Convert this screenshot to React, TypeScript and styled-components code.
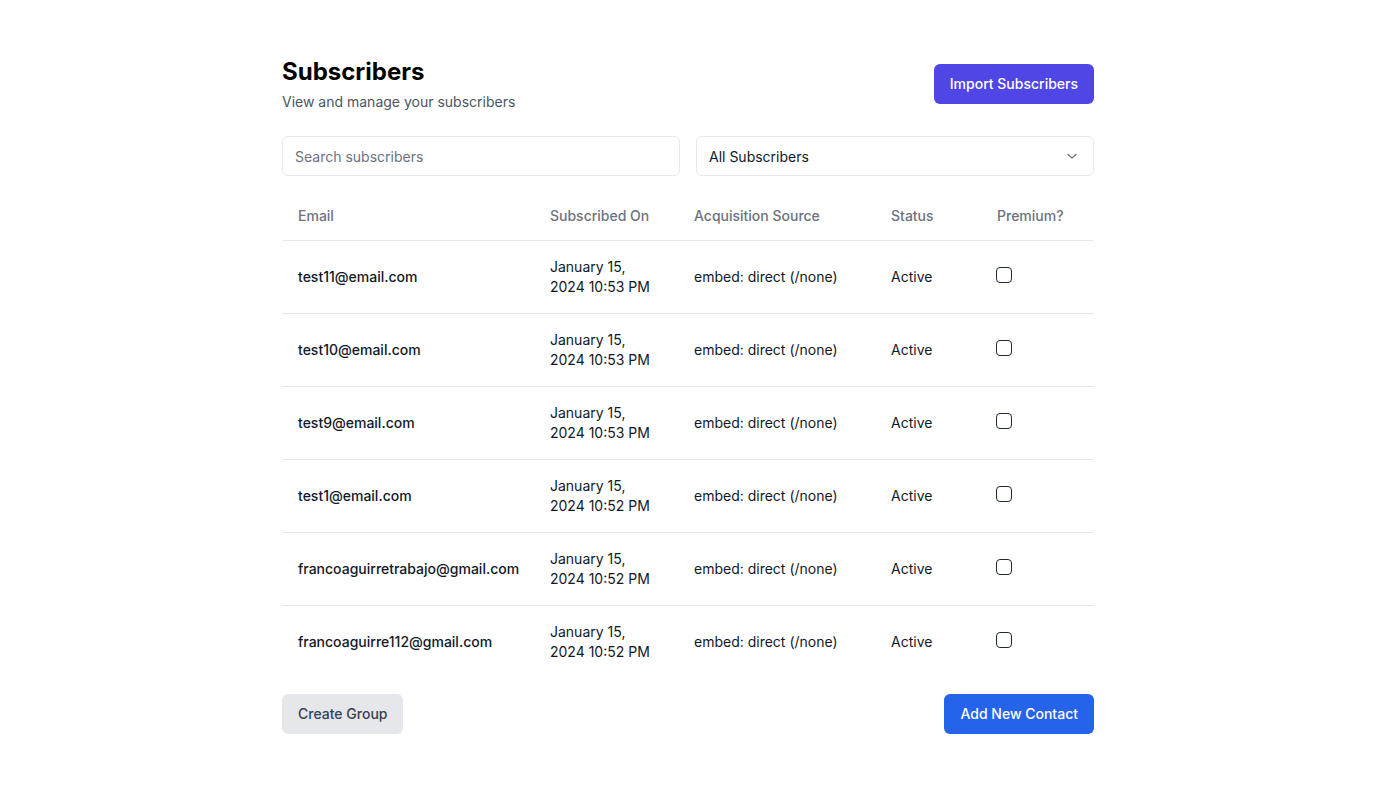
import React from "react";
import styled, { createGlobalStyle } from "styled-components";

const Global = createGlobalStyle`
  * { box-sizing: border-box; }
  body { margin: 0; background: #ffffff; font-family: Inter, "Noto Sans", sans-serif; color: #111827; }
`;

const Page = styled.div`
  width: 812px;
  margin: 0 auto;
  padding-top: 56px;
`;

const Header = styled.div`
  display: flex;
  align-items: center;
  justify-content: space-between;
  margin-bottom: 24px;
`;

const Title = styled.h1`
  margin: 0;
  font-size: 24px;
  line-height: 32px;
  font-weight: 700;
  color: #000;
`;

const Subtitle = styled.p`
  margin: 4px 0 0;
  font-size: 14px;
  line-height: 20px;
  color: #4b5563;
`;

const Button = styled.button<{ $variant: "indigo" | "blue" | "gray" }>`
  height: 40px;
  padding: 0 16px 1px;
  border: none;
  border-radius: 6px;
  font-family: inherit;
  font-size: 14px;
  font-weight: 500;
  cursor: pointer;
  background: ${(p) => (p.$variant === "indigo" ? "#4f46e5" : p.$variant === "blue" ? "#2563eb" : "#e5e7eb")};
  color: ${(p) => (p.$variant === "gray" ? "#374151" : "#ffffff")};
`;

const Filters = styled.div`
  display: grid;
  grid-template-columns: 1fr 1fr;
  gap: 16px;
  margin-bottom: 14px;
`;

const Input = styled.input`
  height: 40px;
  width: 100%;
  border: 1px solid #e5e7eb;
  border-radius: 6px;
  padding: 0 12px;
  font-family: inherit;
  font-size: 14px;
  color: #111827;
  outline: none;
  &::placeholder { color: #6b7280; }
`;

const SelectBox = styled.div`
  height: 40px;
  border: 1px solid #e5e7eb;
  border-radius: 6px;
  padding: 0 11px 0 12px;
  display: flex;
  align-items: center;
  justify-content: space-between;
  font-size: 14px;
  color: #111827;
`;

const Table = styled.table`
  width: 100%;
  border-collapse: collapse;
  table-layout: fixed;
`;

const Th = styled.th`
  text-align: left;
  padding: 16px 16px 14px;
  font-size: 14px;
  line-height: 20px;
  font-weight: 500;
  color: #6b7280;
  border-bottom: 1px solid #e5e7eb;
`;

const Tr = styled.tr`
  & + & td { border-top: 1px solid #e5e7eb; }
`;

const Td = styled.td<{ $strong?: boolean }>`
  padding: 16px;
  font-size: 14px;
  line-height: 20px;
  color: #111827;
  vertical-align: middle;
  font-weight: ${(p) => (p.$strong ? 500 : 400)};
`;

const Check = styled.input`
  appearance: none;
  margin: 0 0 0 -1px;
  width: 16px;
  height: 16px;
  border: 1.5px solid #1f2937;
  border-radius: 4px;
  background: #fff;
  display: block;
  position: relative;
  top: -2px;
`;

const Footer = styled.div`
  display: flex;
  justify-content: space-between;
  margin-top: 16px;
`;

const rows = [
  { email: "test11@email.com", time: "10:53 PM" },
  { email: "test10@email.com", time: "10:53 PM" },
  { email: "test9@email.com", time: "10:53 PM" },
  { email: "test1@email.com", time: "10:52 PM" },
  { email: "francoaguirretrabajo@gmail.com", time: "10:52 PM" },
  { email: "francoaguirre112@gmail.com", time: "10:52 PM" },
];

export default function App() {
  return (
    <>
      <Global />
      <Page>
        <Header>
          <div>
            <Title>Subscribers</Title>
            <Subtitle>View and manage your subscribers</Subtitle>
          </div>
          <Button $variant="indigo">Import Subscribers</Button>
        </Header>
        <Filters>
          <Input placeholder="Search subscribers" />
          <SelectBox>
            <span>All Subscribers</span>
            <svg width="20" height="20" viewBox="0 0 24 24" fill="none" stroke="#6b7280" strokeWidth="1.5" strokeLinecap="round" strokeLinejoin="round">
              <path d="m7 10 5 4.5 5-4.5" />
            </svg>
          </SelectBox>
        </Filters>
        <Table>
          <colgroup>
            <col style={{ width: 252 }} />
            <col style={{ width: 144 }} />
            <col style={{ width: 197 }} />
            <col style={{ width: 106 }} />
            <col style={{ width: 113 }} />
          </colgroup>
          <thead>
            <tr>
              <Th>Email</Th>
              <Th>Subscribed On</Th>
              <Th>Acquisition Source</Th>
              <Th>Status</Th>
              <Th>Premium?</Th>
            </tr>
          </thead>
          <tbody>
            {rows.map((r) => (
              <Tr key={r.email}>
                <Td $strong>{r.email}</Td>
                <Td>
                  January 15,
                  <br />
                  2024 {r.time}
                </Td>
                <Td>embed: direct (/none)</Td>
                <Td>Active</Td>
                <Td>
                  <Check type="checkbox" />
                </Td>
              </Tr>
            ))}
          </tbody>
        </Table>
        <Footer>
          <Button $variant="gray">Create Group</Button>
          <Button $variant="blue">Add New Contact</Button>
        </Footer>
      </Page>
    </>
  );
}
